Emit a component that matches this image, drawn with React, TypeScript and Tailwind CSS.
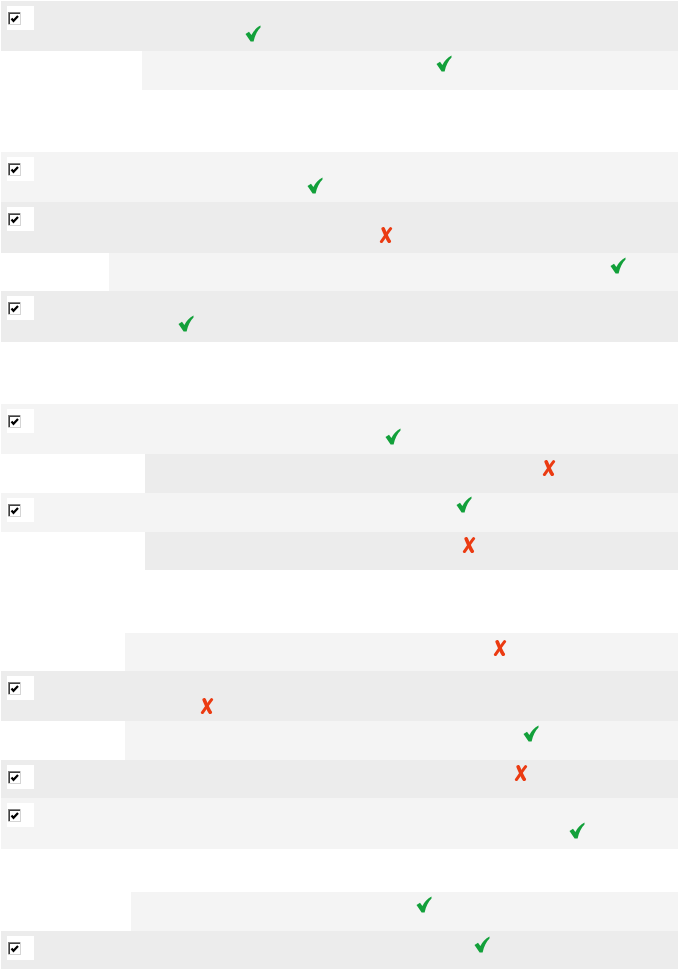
import React from 'react'

type Row = {
  row: string
  checkbox?: boolean
  mark: 'ok' | 'bad'
  pos: string
}

const rows: Row[] = [
  { row: 'h-[50px] bg-[#ececec]', checkbox: true, mark: 'ok', pos: 'ml-[211px] mt-[24px]' },
  { row: 'h-[39px] bg-[#f4f4f4] ml-[141px]', mark: 'ok', pos: 'ml-[294px] mt-[4px]' },
  { row: 'h-[50px] bg-[#f4f4f4] mt-[62px]', checkbox: true, mark: 'ok', pos: 'ml-[273px] mt-[25px]' },
  { row: 'h-[51px] bg-[#ececec]', checkbox: true, mark: 'bad', pos: 'ml-[345px] mt-[25px]' },
  { row: 'h-[38px] bg-[#f4f4f4] ml-[108px]', mark: 'ok', pos: 'ml-[501px] mt-[4px]' },
  { row: 'h-[51px] bg-[#ececec]', checkbox: true, mark: 'ok', pos: 'ml-[144px] mt-[24px]' },
  { row: 'h-[50px] bg-[#f4f4f4] mt-[62px]', checkbox: true, mark: 'ok', pos: 'ml-[351px] mt-[24px]' },
  { row: 'h-[39px] bg-[#ececec] ml-[144px]', mark: 'bad', pos: 'ml-[397px] mt-[6px]' },
  { row: 'h-[39px] bg-[#f4f4f4]', checkbox: true, mark: 'ok', pos: 'ml-[422px] mt-[3px]' },
  { row: 'h-[38px] bg-[#ececec] ml-[144px]', mark: 'bad', pos: 'ml-[317px] mt-[5px]' },
  { row: 'h-[38px] bg-[#f4f4f4] ml-[124px] mt-[63px]', mark: 'bad', pos: 'ml-[368px] mt-[7px]' },
  { row: 'h-[50px] bg-[#ececec]', checkbox: true, mark: 'bad', pos: 'ml-[166px] mt-[27px]' },
  { row: 'h-[39px] bg-[#f4f4f4] ml-[124px]', mark: 'ok', pos: 'ml-[398px] mt-[4px]' },
  { row: 'h-[38px] bg-[#ececec]', checkbox: true, mark: 'bad', pos: 'ml-[480px] mt-[5px]' },
  { row: 'h-[51px] bg-[#f4f4f4]', checkbox: true, mark: 'ok', pos: 'ml-[535px] mt-[24px]' },
  { row: 'h-[39px] bg-[#f4f4f4] ml-[130px] mt-[43px]', mark: 'ok', pos: 'ml-[285px] mt-[4px]' },
  { row: 'h-[38px] bg-[#ececec]', checkbox: true, mark: 'ok', pos: 'ml-[440px] mt-[5px]' },
]

const CheckBox = () => (
  <div className="ml-[6px] mt-[5px] w-[27px] h-[24px] bg-white shrink-0">
    <svg width="13" height="13" viewBox="0 0 13 13" className="ml-[1px] mt-[6px]">
      <rect x="0" y="0" width="13" height="13" fill="#d4d4d4" />
      <rect x="0" y="0" width="12" height="12" fill="#808080" />
      <rect x="1" y="1" width="11" height="11" fill="#404040" />
      <rect x="2" y="2" width="10" height="10" fill="#ffffff" />
      <path d="M3.5 6.5 L5.5 8.8 L10 4" stroke="#000" strokeWidth="2.2" fill="none" />
    </svg>
  </div>
)

const Tick = () => (
  <svg width="16" height="17" viewBox="0 0 16 17">
    <path
      d="M0.5 9 L4 6.8 L6.4 10 C8.5 6 11.5 2.5 15.5 0.5 L15.5 2.5 C12.5 5.5 10 10 8.6 16.5 L5.6 16.5 Z"
      fill="#12a03a"
    />
  </svg>
)

const Cross = () => (
  <svg width="14" height="16" viewBox="0 0 14 16">
    <path d="M4.2 1.8 C6 6 8 11 10.2 14.3" stroke="#eb3b12" strokeWidth="3.6" strokeLinecap="round" fill="none" />
    <path d="M11.6 1.6 C8.2 6 5.6 10 2.4 14.6" stroke="#eb3b12" strokeWidth="3" strokeLinecap="round" fill="none" />
  </svg>
)

export default function App() {
  return (
    <div className="w-[679px] min-h-[971px] bg-white px-[1px] pt-[1px] flex flex-col font-['Liberation_Sans',sans-serif]">
      {rows.map((r, i) => (
        <div key={i} className={`flex items-start ${r.row}`}>
          {r.checkbox && <CheckBox />}
          <div className={r.pos}>{r.mark === 'ok' ? <Tick /> : <Cross />}</div>
        </div>
      ))}
    </div>
  )
}
